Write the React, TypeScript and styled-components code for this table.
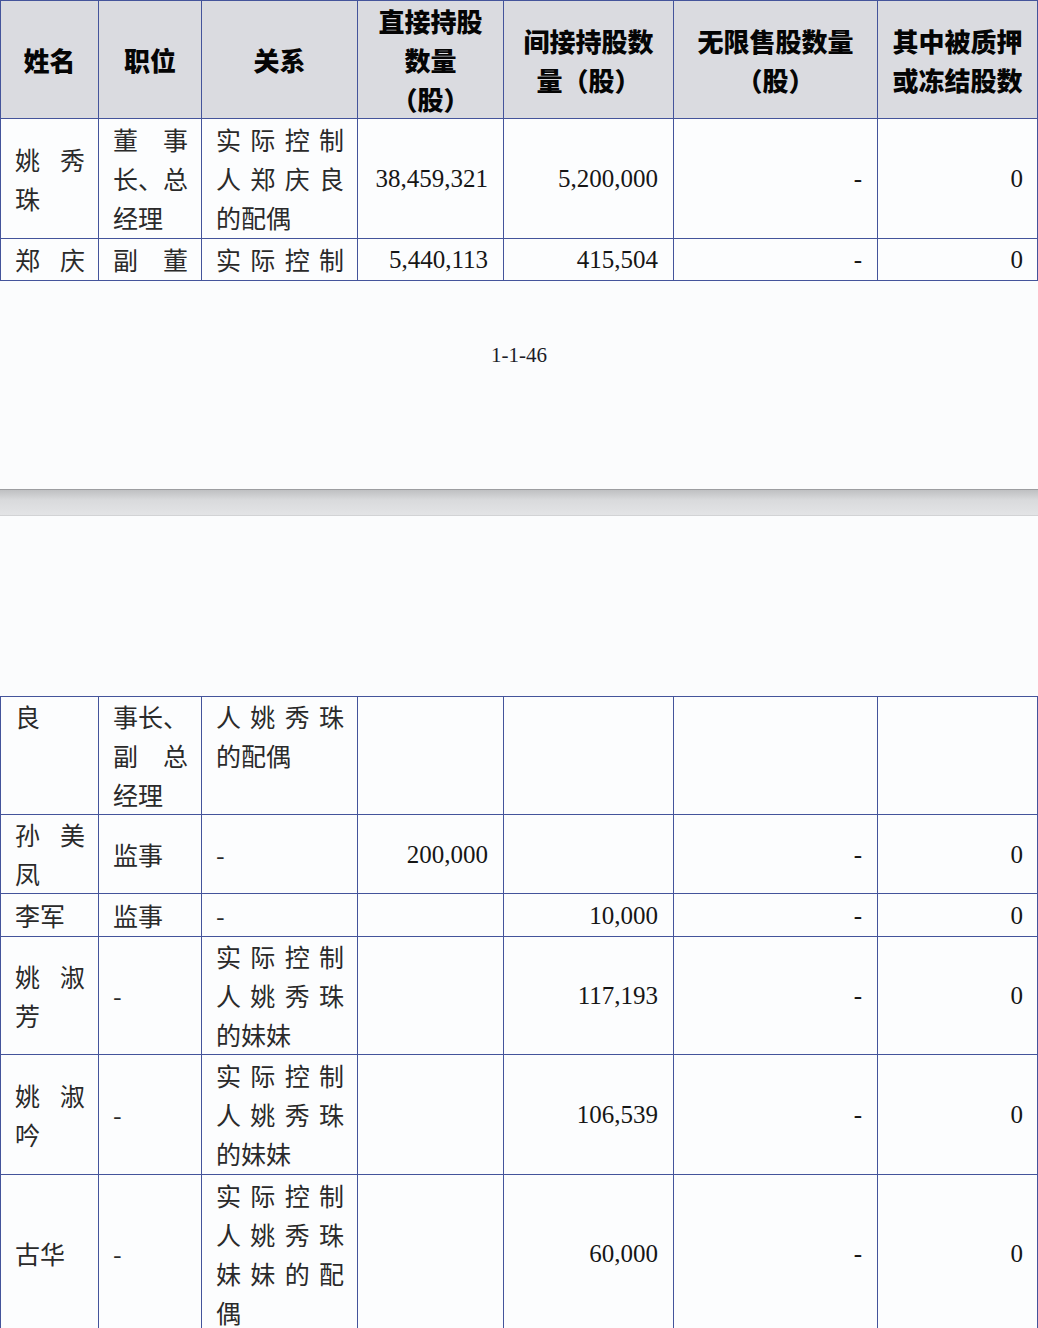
import React from "react";
import styled, { createGlobalStyle } from "styled-components";

type TextCell = { lines: string[]; open?: boolean };

type Row = {
  h: number;
  top?: boolean;
  name: TextCell;
  post: TextCell;
  rel: TextCell;
  direct: string;
  indirect: string;
  free: string;
  pledged: string;
};

// a cell whose last line is its natural end
const t = (...lines: string[]): TextCell => ({ lines });
// a cell cut by the page break: every line is spread
const open = (...lines: string[]): TextCell => ({ lines, open: true });

const COLS = [98, 103, 156, 146, 170, 204, 160];

const HEAD = [
  ["姓名"],
  ["职位"],
  ["关系"],
  ["直接持股", "数量", "（股）"],
  ["间接持股数", "量（股）"],
  ["无限售股数量", "（股）"],
  ["其中被质押", "或冻结股数"],
];

const firstPage: Row[] = [
  {
    h: 120,
    name: t("姚秀", "珠"),
    post: t("董事", "长、总", "经理"),
    rel: t("实际控制", "人郑庆良", "的配偶"),
    direct: "38,459,321",
    indirect: "5,200,000",
    free: "-",
    pledged: "0",
  },
  {
    h: 42,
    name: open("郑庆"),
    post: open("副董"),
    rel: open("实际控制"),
    direct: "5,440,113",
    indirect: "415,504",
    free: "-",
    pledged: "0",
  },
];

const nextPage: Row[] = [
  {
    h: 118,
    top: true,
    name: t("良"),
    post: t("事长、", "副总", "经理"),
    rel: t("人姚秀珠", "的配偶"),
    direct: "",
    indirect: "",
    free: "",
    pledged: "",
  },
  {
    h: 78,
    name: t("孙美", "凤"),
    post: t("监事"),
    rel: t("-"),
    direct: "200,000",
    indirect: "",
    free: "-",
    pledged: "0",
  },
  {
    h: 43,
    name: t("李军"),
    post: t("监事"),
    rel: t("-"),
    direct: "",
    indirect: "10,000",
    free: "-",
    pledged: "0",
  },
  {
    h: 118,
    name: t("姚淑", "芳"),
    post: t("-"),
    rel: t("实际控制", "人姚秀珠", "的妹妹"),
    direct: "",
    indirect: "117,193",
    free: "-",
    pledged: "0",
  },
  {
    h: 120,
    name: t("姚淑", "吟"),
    post: t("-"),
    rel: t("实际控制", "人姚秀珠", "的妹妹"),
    direct: "",
    indirect: "106,539",
    free: "-",
    pledged: "0",
  },
  {
    h: 158,
    name: t("古华"),
    post: t("-"),
    rel: t("实际控制", "人姚秀珠", "妹妹的配", "偶"),
    direct: "",
    indirect: "60,000",
    free: "-",
    pledged: "0",
  },
];

function Lines({ cell }: { cell: TextCell }) {
  return (
    <>
      {cell.lines.map((line, i) => (
        <Line key={i} $full={cell.open || i < cell.lines.length - 1}>
          {line}
        </Line>
      ))}
    </>
  );
}

function ShareTable({ rows, head }: { rows: Row[]; head?: boolean }) {
  return (
    <Table>
      <colgroup>
        {COLS.map((w, i) => (
          <Col key={i} $w={w} />
        ))}
      </colgroup>
      {head && (
        <thead>
          <Tr $h={118}>
            {HEAD.map((lines, i) => (
              <HeadCell key={i}>
                {lines.map((l) => (
                  <div key={l}>{l}</div>
                ))}
              </HeadCell>
            ))}
          </Tr>
        </thead>
      )}
      <tbody>
        {rows.map((r, i) => (
          <Tr key={i} $h={r.h}>
            <TextTd $top={r.top}>
              <Lines cell={r.name} />
            </TextTd>
            <TextTd $top={r.top}>
              <Lines cell={r.post} />
            </TextTd>
            <TextTd $top={r.top}>
              <Lines cell={r.rel} />
            </TextTd>
            <NumTd>{r.direct}</NumTd>
            <NumTd>{r.indirect}</NumTd>
            <NumTd>{r.free}</NumTd>
            <NumTd $tight>{r.pledged}</NumTd>
          </Tr>
        ))}
      </tbody>
    </Table>
  );
}

export default function App() {
  return (
    <>
      <GlobalStyle />
      <Page>
        <ShareTable rows={firstPage} head />
        <Footer>
          <PageNo>1-1-46</PageNo>
        </Footer>
        <PageGap />
        <TopMargin />
        <ShareTable rows={nextPage} />
      </Page>
    </>
  );
}

const GlobalStyle = createGlobalStyle`
  html, body {
    margin: 0;
    padding: 0;
    background: #fbfcfd;
  }
  body {
    font-family: "Noto Sans CJK SC", "Noto Sans", sans-serif;
  }
`;

const Page = styled.div`
  width: 1038px;
  overflow: hidden;
`;

const Table = styled.table`
  width: 1037px;
  table-layout: fixed;
  border-collapse: collapse;
`;

const Col = styled.col<{ $w: number }>`
  width: ${(p) => p.$w}px;
`;

const Tr = styled.tr<{ $h: number }>`
  height: ${(p) => p.$h}px;
`;

const HeadCell = styled.th`
  border: 1px solid #44549b;
  background: #dadbe0;
  padding: 0 2px;
  vertical-align: middle;
  text-align: center;
  font-family: "Noto Sans CJK SC", sans-serif;
  font-size: 26px;
  font-weight: 900;
  line-height: 39px;
  color: #050505;
  white-space: nowrap;
`;

const TextTd = styled.td<{ $top?: boolean }>`
  border: 1px solid #44549b;
  background: #fcfdfe;
  padding: 0 13px 0 14px;
  vertical-align: ${(p) => (p.$top ? "top" : "middle")};
  font-family: "Noto Sans CJK SC", sans-serif;
  font-size: 25px;
  line-height: 39px;
  color: #2a2a2a;
`;

const Line = styled.div<{ $full: boolean }>`
  text-align: ${(p) => (p.$full ? "justify" : "left")};
  text-align-last: ${(p) => (p.$full ? "justify" : "left")};
`;

const NumTd = styled.td<{ $tight?: boolean }>`
  border: 1px solid #44549b;
  background: #fcfdfe;
  padding: 0 ${(p) => (p.$tight ? 14 : 15)}px 0 8px;
  vertical-align: middle;
  text-align: right;
  font-family: "Liberation Serif", "Times New Roman", serif;
  font-size: 25px;
  line-height: 39px;
  color: #161616;
`;

const Footer = styled.div`
  height: 208px;
  display: flex;
  justify-content: center;
  padding-top: 62px;
  box-sizing: border-box;
`;

const PageNo = styled.div`
  font-family: "Liberation Serif", "Times New Roman", serif;
  font-size: 21px;
  line-height: 24px;
  color: #1c1c28;
`;

const PageGap = styled.div`
  height: 27px;
  box-sizing: border-box;
  border-top: 1px solid #9c9da0;
  border-bottom: 1px solid #d2d3d5;
  background: linear-gradient(#bfc0c2, #d9dadc 40%, #e3e4e6 100%);
`;

const TopMargin = styled.div`
  height: 180px;
`;
